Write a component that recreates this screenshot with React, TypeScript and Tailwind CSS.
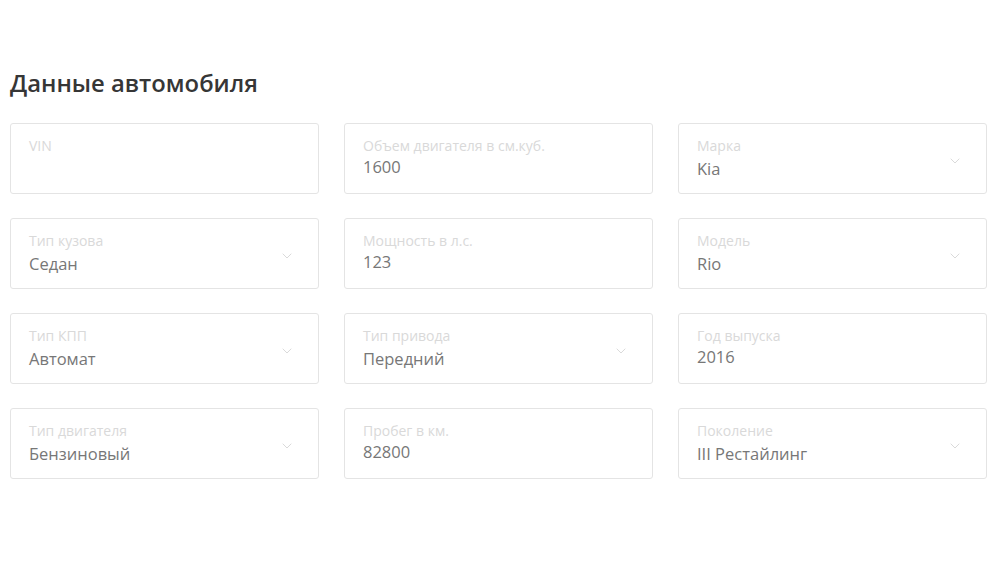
import { ChevronDown } from 'lucide-react';

type Field = { label: string; value: string; select?: boolean };

const fields: Field[] = [
  { label: 'VIN', value: '' },
  { label: 'Объем двигателя в см.куб.', value: '1600' },
  { label: 'Марка', value: 'Kia', select: true },
  { label: 'Тип кузова', value: 'Седан', select: true },
  { label: 'Мощность в л.с.', value: '123' },
  { label: 'Модель', value: 'Rio', select: true },
  { label: 'Тип КПП', value: 'Автомат', select: true },
  { label: 'Тип привода', value: 'Передний', select: true },
  { label: 'Год выпуска', value: '2016' },
  { label: 'Тип двигателя', value: 'Бензиновый', select: true },
  { label: 'Пробег в км.', value: '82800' },
  { label: 'Поколение', value: 'III Рестайлинг', select: true },
];

function CarField({ field }: { field: Field }) {
  return (
    <div className="relative h-[71px] rounded-[3px] border border-[#e4e4e4] bg-white px-[18px] pt-[12px]">
      <div className="text-[14px] leading-[19px] text-[#d9d9d9]">{field.label}</div>
      <div
        className={
          field.select
            ? 'mt-[2px] text-[16.5px] leading-[24px] text-[#777777]'
            : 'text-[16.5px] leading-[24px] text-[#777777]'
        }
      >
        {field.value}
      </div>
      {field.select && (
        <ChevronDown
          className="absolute right-[23px] top-[29px] h-[16px] w-[16px] text-[#dadada]"
          strokeWidth={1.5}
        />
      )}
    </div>
  );
}

export default function App() {
  return (
    <div
      className="min-h-[561px] w-[1000px] bg-white pl-[10px] pt-[67px]"
      style={{ fontFamily: '"Open Sans", "Noto Sans", sans-serif' }}
    >
      <h2 className="text-[23.8px] font-semibold leading-[32px] text-[#363636]">
        Данные автомобиля
      </h2>

      <div className="mt-[24px] grid w-[977px] grid-cols-3 gap-x-[25px] gap-y-[24px]">
        {fields.map((f) => (
          <CarField key={f.label} field={f} />
        ))}
      </div>
    </div>
  );
}
